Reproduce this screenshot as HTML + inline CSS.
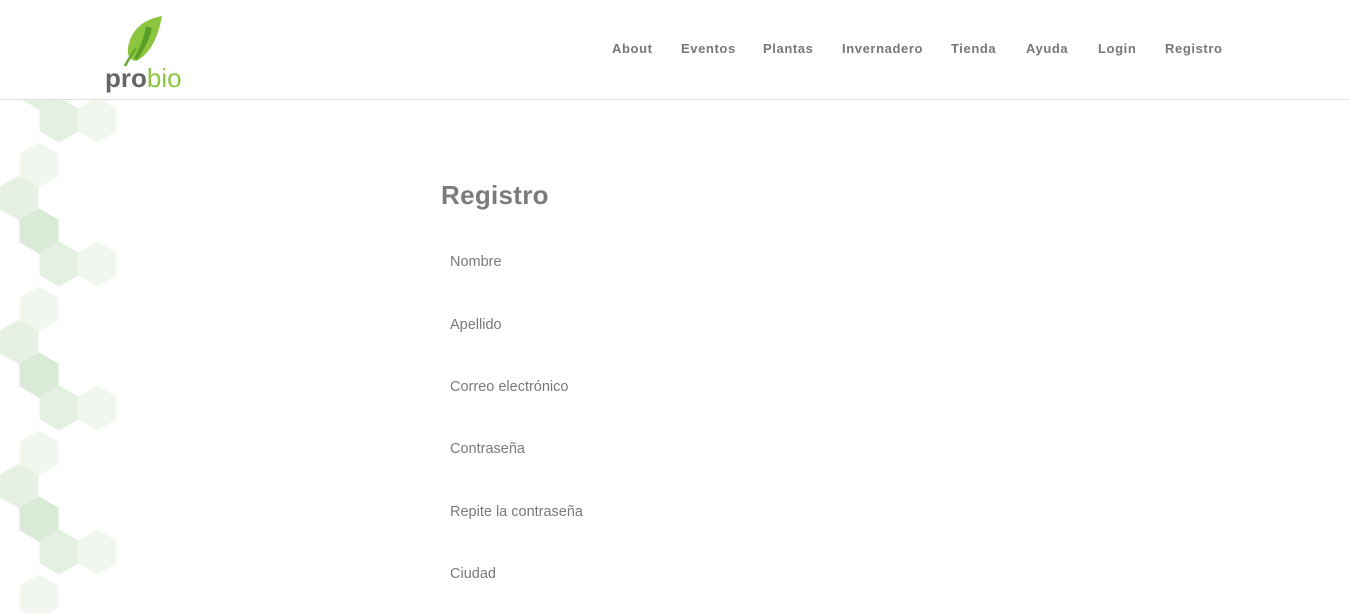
<!DOCTYPE html>
<html><head><meta charset="utf-8"><style>
body{margin:0;width:1349px;height:613px;overflow:hidden;background:#fff;font-family:"Liberation Sans",sans-serif;position:relative}
header{position:absolute;left:0;top:0;width:1349px;height:99px;background:#fff;border-bottom:1px solid #ddd;z-index:2}
nav a{position:absolute;top:41px;font-size:13px;font-weight:bold;color:#777;letter-spacing:0.6px;text-decoration:none}
h1{position:absolute;left:441px;top:180px;margin:0;font-size:26px;font-weight:bold;color:#7b7b7b;letter-spacing:0.3px}
.l{position:absolute;left:450px;font-size:14.5px;color:#7a7a7a}
svg.bg{position:absolute;left:0;top:0;z-index:1}
</style></head><body>
<svg class="bg" width="130" height="613">
<defs><polygon id="h" points="0,-22.5 19.5,-11.25 19.5,11.25 0,22.5 -19.5,11.25 -19.5,-11.25"/></defs>
<g>
<use href="#h" x="39" y="87" fill="#e3efe0"/>
<use href="#h" x="59" y="120" fill="#e4f0e2"/><use href="#h" x="97" y="120" fill="#f1f7ef"/>
<use href="#h" x="39" y="165" fill="#f1f7ef"/><use href="#h" x="19" y="198" fill="#e6f1e4"/>
<use href="#h" x="39" y="231" fill="#d9ebd6"/>
<use href="#h" x="59" y="264" fill="#e4f0e2"/><use href="#h" x="97" y="264" fill="#f1f7ef"/>
<use href="#h" x="39" y="309" fill="#f1f7ef"/><use href="#h" x="19" y="342" fill="#e6f1e4"/>
<use href="#h" x="39" y="375" fill="#d9ebd6"/>
<use href="#h" x="59" y="408" fill="#e4f0e2"/><use href="#h" x="97" y="408" fill="#f1f7ef"/>
<use href="#h" x="39" y="453" fill="#f1f7ef"/><use href="#h" x="19" y="486" fill="#e6f1e4"/>
<use href="#h" x="39" y="519" fill="#d9ebd6"/>
<use href="#h" x="59" y="552" fill="#e4f0e2"/><use href="#h" x="97" y="552" fill="#f1f7ef"/>
<use href="#h" x="39" y="597" fill="#f1f7ef"/>
</g></svg>
<header>
<svg width="90" height="95" style="position:absolute;left:100px;top:8px">
<path d="M62 8 C40 12 30 25 28 40 C27 48 30 52 36 53 C50 46 58 30 62 8Z" fill="#8cc63f"/>
<path d="M46 18 C44 30 40 40 34 50 L37 52 C44 42 50 30 52 20Z" fill="#5a9e2a"/>
<path d="M36 40 C32 46 28 52 25 58" stroke="#6aa832" stroke-width="2.5" fill="none"/>
<text x="5" y="79" font-family="Liberation Sans,sans-serif" font-size="26" font-weight="bold" fill="#666">pro<tspan fill="#8cc63f" font-weight="normal">bio</tspan></text>
</svg>
<nav>
<a style="left:612px">About</a><a style="left:681px">Eventos</a><a style="left:763px">Plantas</a><a style="left:842px">Invernadero</a><a style="left:951px">Tienda</a><a style="left:1026px">Ayuda</a><a style="left:1098px">Login</a><a style="left:1165px">Registro</a>
</nav>
</header>
<h1>Registro</h1>
<div class="l" style="top:254px">Nombre</div>
<div class="l" style="top:317px">Apellido</div>
<div class="l" style="top:379px">Correo electrónico</div>
<div class="l" style="top:441px">Contraseña</div>
<div class="l" style="top:504px">Repite la contraseña</div>
<div class="l" style="top:566px">Ciudad</div>
</body></html>
